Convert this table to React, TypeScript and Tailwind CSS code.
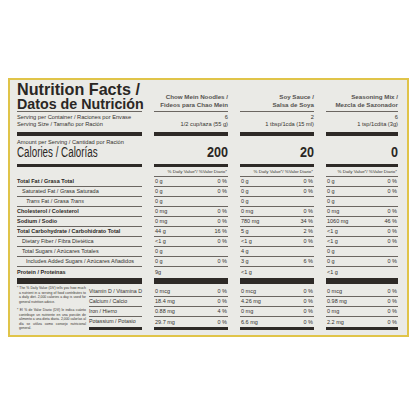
import React from "react";

type V = [string, string?];
type Row = { label: React.ReactNode; bold?: boolean; indent?: 0 | 1 | 2; v: V[] };

const rows: Row[] = [
  { label: "Total Fat / Grasa Total", bold: true, v: [["0 g", "0 %"], ["0 g", "0 %"], ["0 g", "0 %"]] },
  { label: "Saturated Fat / Grasa Saturada", indent: 1, v: [["0 g", "0 %"], ["0 g", "0 %"], ["0 g", "0 %"]] },
  {
    label: (
      <>
        <i>Trans</i> Fat / Grasa <i>Trans</i>
      </>
    ),
    indent: 2,
    v: [["0 g"], ["0 g"], ["0 g"]],
  },
  { label: "Cholesterol / Colesterol", bold: true, v: [["0 mg", "0 %"], ["0 mg", "0 %"], ["0 mg", "0 %"]] },
  { label: "Sodium / Sodio", bold: true, v: [["0 mg", "0 %"], ["780 mg", "34 %"], ["1060 mg", "46 %"]] },
  { label: "Total Carbohydrate / Carbohidrato Total", bold: true, v: [["44 g", "16 %"], ["5 g", "2 %"], ["<1 g", "0 %"]] },
  { label: "Dietary Fiber / Fibra Dietética", indent: 1, v: [["<1 g", "0 %"], ["<1 g", "0 %"], ["<1 g", "0 %"]] },
  { label: "Total Sugars / Azúcares Totales", indent: 1, v: [["0 g"], ["4 g"], ["0 g"]] },
  { label: "Includes Added Sugars / Azúcares Añadidos", indent: 2, v: [["0 g", "0 %"], ["3 g", "6 %"], ["0 g", "0 %"]] },
];

const protein: V[] = [["9g"], ["<1 g"], ["<1 g"]];

const vitamins: { label: string; v: V[] }[] = [
  { label: "Vitamin D / Vitamina D", v: [["0 mcg", "0 %"], ["0 mcg", "0 %"], ["0 mcg", "0 %"]] },
  { label: "Calcium / Calcio", v: [["18.4 mg", "0 %"], ["4.26 mg", "0 %"], ["0.98 mg", "0 %"]] },
  { label: "Iron / Hierro", v: [["0.88 mg", "4 %"], ["0 mg", "0 %"], ["0 mg", "0 %"]] },
  { label: "Potassium / Potasio", v: [["29.7 mg", "0 %"], ["6.6 mg", "0 %"], ["2.2 mg", "0 %"]] },
];

const cols = [
  { t1: "Chow Mein Noodles /", t2: "Fideos para Chao Mein", n: "6", size: "1/2 cup/taza (55 g)", cal: "200" },
  { t1: "Soy Sauce /", t2: "Salsa de Soya", n: "2", size: "1 tbsp/1cda (15 ml)", cal: "20" },
  { t1: "Seasoning Mix /", t2: "Mezcla de Sazonador", n: "6", size: "1 tsp/1cdita (3g)", cal: "0" },
];

function ValueCell({ v }: { v: V }) {
  return (
    <div className="h-[10px] border-b border-[#6b6661] flex items-center justify-between px-[1px] text-[5.5px] leading-[7px] whitespace-nowrap">
      <span>{v[0]}</span>
      <span>{v[1] ?? ""}</span>
    </div>
  );
}

export default function App() {
  return (
    <div className="w-[416px] h-[416px] bg-white overflow-hidden font-['Liberation_Sans',Arial,sans-serif] text-[#35322f]">
      <div className="ml-[8px] mt-[78px] w-[401px] h-[259px] border-2 border-[#e0c449] bg-[#eaeae6]">
        <div className="pl-[7px] grid grid-cols-[125px_74px_74px_72px] gap-x-[12px]">
          {/* Header row */}
          <div className="h-[32px] border-b border-[#6b6661] pt-[2px]">
            <div className="origin-left scale-x-[0.95] whitespace-nowrap font-bold text-[#2a2724]">
              <div className="text-[17px] leading-[15px]">Nutrition Facts /</div>
              <div className="text-[15px] leading-[13px]">Datos de Nutrición</div>
            </div>
          </div>
          {cols.map((c) => (
            <div
              key={c.t1}
              className="h-[32px] border-b border-[#6b6661] flex flex-col justify-end items-end pb-[2px] text-[6.2px] leading-[8px] font-bold text-[#555350] text-right whitespace-nowrap"
            >
              <div>{c.t1}</div>
              <div>{c.t2}</div>
            </div>
          ))}

          {/* Serving row */}
          <div className="h-[24px] border-b-[4px] border-[#2e2a27] pt-[2px] text-[5.7px] leading-[7px] whitespace-nowrap">
            <div>Serving per Container / Raciones por Envase</div>
            <div>Serving Size / Tamaño por Ración</div>
          </div>
          {cols.map((c) => (
            <div
              key={c.t1 + "s"}
              className="h-[24px] border-b-[4px] border-[#2e2a27] pt-[2px] text-[5.7px] leading-[7px] text-right whitespace-nowrap"
            >
              <div>{c.n}</div>
              <div>{c.size}</div>
            </div>
          ))}

          {/* Calories row */}
          <div className="h-[31px] border-b-[3px] border-[#2e2a27] pt-[3px] whitespace-nowrap">
            <div className="text-[5.7px] leading-[7px]">Amount per Serving / Cantidad por Ración</div>
            <div className="origin-left scale-x-[0.7] text-[14px] leading-[13px] text-[#2a2724]">Calories / Calorías</div>
          </div>
          {cols.map((c) => (
            <div key={c.t1 + "c"} className="h-[31px] border-b-[3px] border-[#2e2a27] pt-[3px]">
              <div className="h-[7px]" />
              <div className="origin-right scale-x-[0.9] text-right text-[14px] leading-[13px] font-bold text-[#2a2724]">
                {c.cal}
              </div>
            </div>
          ))}

          {/* DV header */}
          <div className="h-[10px]" />
          {cols.map((c) => (
            <div
              key={c.t1 + "d"}
              className="h-[10px] border-b border-[#6b6661] flex items-center justify-end pr-[1px] pt-[1px] text-[4.4px] whitespace-nowrap"
            >
              % Daily Value*/ %Valor Diario*
            </div>
          ))}

          {/* Nutrient rows */}
          {rows.map((r, i) => (
            <React.Fragment key={i}>
              <div
                className={`h-[10px] border-b border-[#6b6661] flex items-center text-[5.5px] whitespace-nowrap ${
                  r.bold ? "font-bold text-[#2a2724]" : ""
                } ${r.indent === 1 ? "pl-[5px]" : r.indent === 2 ? "pl-[9px]" : ""}`}
              >
                <span>{r.label}</span>
              </div>
              {r.v.map((v, j) => (
                <ValueCell key={j} v={v} />
              ))}
            </React.Fragment>
          ))}

          {/* Protein */}
          <div className="h-[17px] border-b-[6px] border-[#2e2a27] flex items-center text-[5.5px] font-bold text-[#2a2724] whitespace-nowrap">
            Protein / Proteínas
          </div>
          {protein.map((v, j) => (
            <div
              key={j}
              className="h-[17px] border-b-[6px] border-[#2e2a27] flex items-center px-[1px] text-[5.5px] whitespace-nowrap"
            >
              {v[0]}
            </div>
          ))}

          {/* Vitamins */}
          <div className="h-[46px] flex gap-[3px]">
            <div className="w-[71px] pt-[2px] text-[3.4px] leading-[4.5px] text-justify">
              <p className="pl-[2px] -indent-[2px]">
                * The % Daily Value (DV) tells you how much a nutrient in a serving of food contributes to a daily diet.
                2,000 calories a day is used for general nutrition advice.
              </p>
              <p className="pl-[2px] -indent-[2px] mt-[4px]">
                * El % de Valor Diario (DV) le indica cuánto contribuye un nutriente en una porción de alimento a una dieta
                diaria. 2,000 calorías al día se utiliza como consejo nutricional general.
              </p>
            </div>
            <div className="flex-1 pt-[3px]">
              {vitamins.map((vt, i) => (
                <div
                  key={vt.label}
                  className={`flex items-center text-[5.3px] whitespace-nowrap ${
                    i === 3 ? "h-[13px] border-b-[3px] border-[#2e2a27]" : "h-[10px] border-b border-[#6b6661]"
                  }`}
                >
                  {vt.label}
                </div>
              ))}
            </div>
          </div>
          {[0, 1, 2].map((ci) => (
            <div key={ci} className="h-[46px] pt-[3px]">
              {vitamins.map((vt, i) => (
                <div
                  key={vt.label}
                  className={`flex items-center justify-between px-[1px] text-[5.5px] whitespace-nowrap ${
                    i === 3 ? "h-[13px] border-b-[3px] border-[#2e2a27]" : "h-[10px] border-b border-[#6b6661]"
                  }`}
                >
                  <span>{vt.v[ci][0]}</span>
                  <span>{vt.v[ci][1]}</span>
                </div>
              ))}
            </div>
          ))}
        </div>
      </div>
    </div>
  );
}
